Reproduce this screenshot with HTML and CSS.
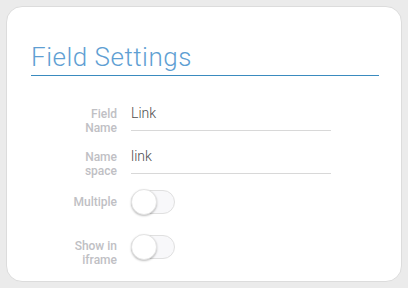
FILE: index.html
```html
<!DOCTYPE html>
<html lang="en">
<head>
    <meta charset="UTF-8">
    <title>Field Settings</title>
    <link rel="stylesheet" href="styles.css">
</head>
<body>
    <div class="card">
        <h1 class="title">Field Settings</h1>
        <div class="row row-name">
            <label class="label">Field<br>Name</label>
            <div class="input">Link</div>
        </div>
        <div class="row row-space">
            <label class="label">Name<br>space</label>
            <div class="input">link</div>
        </div>
        <div class="row row-multiple">
            <label class="label">Multiple</label>
            <div class="toggle"><span class="knob"></span></div>
        </div>
        <div class="row row-iframe">
            <label class="label">Show in<br>iframe</label>
            <div class="toggle"><span class="knob"></span></div>
        </div>
    </div>
</body>
</html>
```

FILE: styles.css
```css
* {
    box-sizing: border-box;
}
body {
    margin: 0;
    background: #ebebeb;
    font-family: Roboto, "Liberation Sans", sans-serif;
}
.card {
    margin: 6px;
    height: 276px;
    background: #ffffff;
    border: 1px solid #dcdcdc;
    border-radius: 16px;
    padding: 35px 22px 0 24px;
}
.title {
    margin: 0;
    font-size: 26px;
    font-weight: 300;
    letter-spacing: 0.5px;
    line-height: 30px;
    color: #5f9fd3;
    padding-bottom: 3px;
    border-bottom: 1px solid #3a8bbf;
}
.row {
    display: flex;
    align-items: flex-start;
}
.row-name {
    margin-top: 28px;
}
.row-space {
    margin-top: 12px;
}
.row-multiple {
    margin-top: 12px;
    align-items: center;
}
.row-iframe {
    margin-top: 21px;
}
.label {
    width: 86px;
    margin-right: 14px;
    margin-top: 3px;
    text-align: right;
    font-size: 12px;
    font-weight: 500;
    line-height: 14px;
    color: #c0c0c4;
}
.row-multiple .label {
    margin-top: 0;
}
.row-iframe .label {
    margin-top: 4px;
}
.input {
    width: 200px;
    height: 27px;
    padding-top: 1px;
    border-bottom: 1px solid #d8d8d8;
    font-size: 14px;
    font-weight: 300;
    color: #4d4d4d;
    line-height: 16px;
}
.toggle {
    position: relative;
    width: 44px;
    height: 24px;
    border: 1px solid #e0e0e0;
    border-radius: 12px;
    background: #f8f8fa;
}
.knob {
    position: absolute;
    left: -1px;
    top: -2px;
    width: 26px;
    height: 26px;
    border-radius: 50%;
    background: #ffffff;
    border: 1px solid #e4e4e4;
    box-shadow: 0 1px 2px rgba(0, 0, 0, 0.25);
}
```
